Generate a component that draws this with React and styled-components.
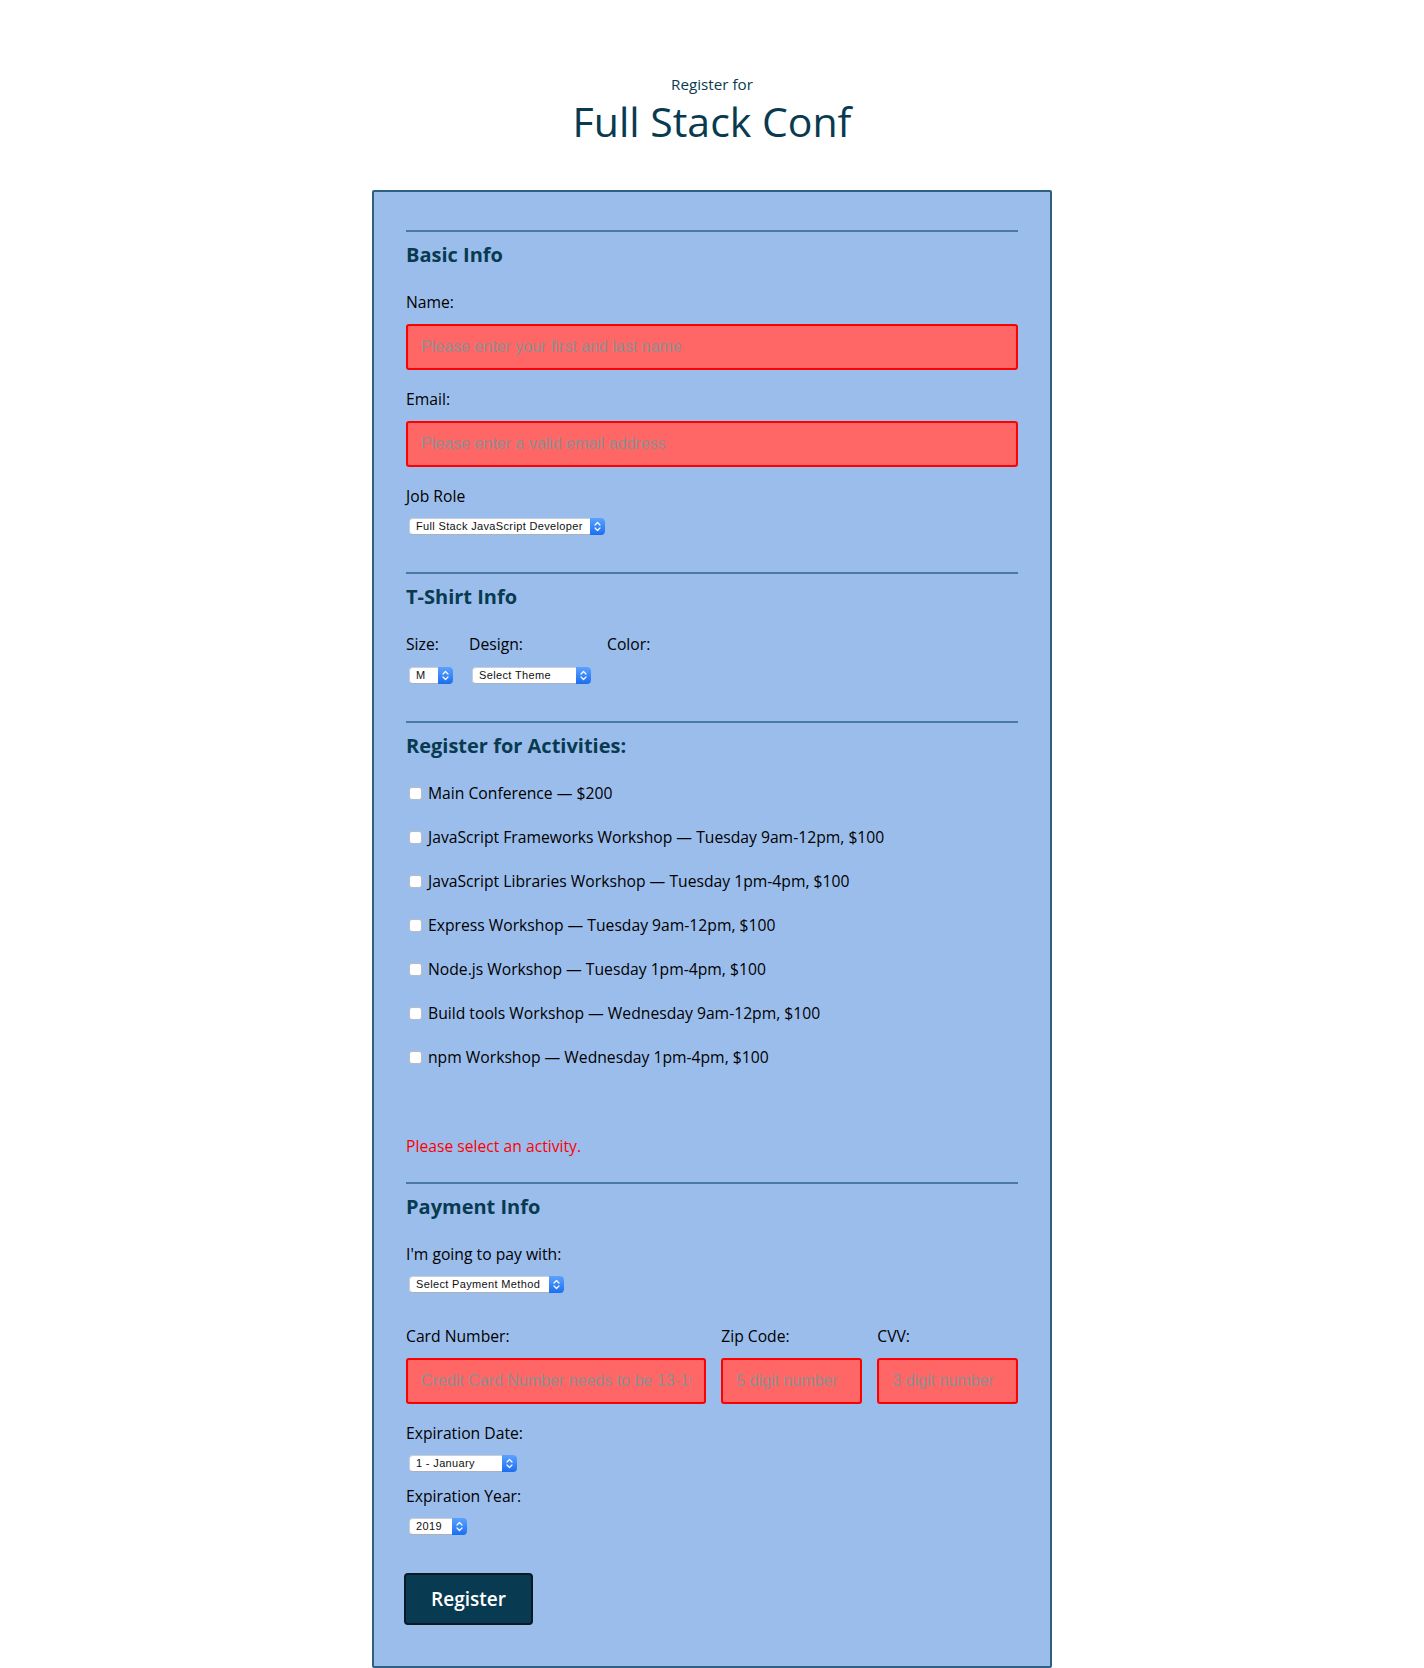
import React from "react";
import styled, { createGlobalStyle } from "styled-components";

const GlobalStyle = createGlobalStyle`
  body {
    margin: 0;
    background: #ffffff;
    font-family: "Open Sans", Lato, sans-serif;
    color: #000;
  }
`;

const Page = styled.div`
  display: flex;
  flex-direction: column;
  align-items: center;
  padding-top: 74px;
`;

const Header = styled.header`
  text-align: center;
  color: #083a50;
  margin-bottom: 46px;
`;

const Kicker = styled.div`
  font-size: 15.2px;
  line-height: 20px;
`;

const Title = styled.h1`
  margin: 4px 0 0;
  font-size: 41px;
  line-height: 46px;
  font-weight: 500;
`;

const Form = styled.form`
  box-sizing: border-box;
  width: 680px;
  background: #9bbdec;
  border: 2px solid #2f5f82;
  border-radius: 2px;
  padding: 38px 32px 41px;
`;

const Section = styled.fieldset`
  border: 0;
  border-top: 2px solid #4a7aa0;
  margin: 0;
  padding: 10px 0 37px;
  min-width: 0;
`;

const Legend = styled.h2`
  margin: 1px 0 25px;
  font-size: 20px;
  line-height: 24px;
  font-weight: 700;
  color: #083a50;
`;

const Label = styled.label`
  display: block;
  font-size: 15.7px;
  line-height: 20px;
  margin-bottom: 12px;
`;

const TextInput = styled.input`
  display: block;
  box-sizing: border-box;
  width: 100%;
  height: 46px;
  margin: 0 0 19px;
  padding: 0 13px;
  background: #ff6666;
  border: 2px solid #ff0000;
  border-radius: 3px;
  font-family: "Liberation Sans", Arial, sans-serif;
  font-size: 16px;
  outline: none;

  &::placeholder {
    color: #8f8f8f;
    opacity: 1;
  }
`;

const SelectWrap = styled.div`
  position: relative;
  width: ${(p) => p.$width}px;
  height: 17px;
  margin: 1px 0 0 3px;
`;

const Select = styled.select`
  appearance: none;
  -webkit-appearance: none;
  display: block;
  box-sizing: border-box;
  width: 100%;
  height: 17px;
  margin: 0;
  padding: 0 18px 0 6px;
  background: #ffffff;
  border: 1px solid #c9ced8;
  border-bottom-color: #aab1bd;
  border-radius: 4px;
  font-family: "Liberation Sans", Arial, sans-serif;
  font-size: 11px;
  letter-spacing: 0.35px;
  line-height: 15px;
  color: #111;
  outline: none;
`;

const ArrowBox = styled.span`
  position: absolute;
  top: 0;
  right: 0;
  width: 15px;
  height: 17px;
  border-radius: 0 4px 4px 0;
  background: linear-gradient(#5ba2ff, #1c6ef0);
  display: flex;
  align-items: center;
  justify-content: center;
  pointer-events: none;
`;

const TshirtRow = styled.div`
  display: flex;
  gap: 16px;
`;

const Column = styled.div`
  display: flex;
  flex-direction: column;
`;

const ActivityList = styled.div`
  display: flex;
  flex-direction: column;
  gap: 24px;
`;

const Activity = styled.label`
  display: flex;
  align-items: center;
  height: 20px;
  font-size: 15.7px;
`;

const Checkbox = styled.input`
  appearance: none;
  -webkit-appearance: none;
  flex: none;
  width: 13px;
  height: 13px;
  margin: 0 6px 0 3px;
  background: #fff;
  border: 1px solid #b8bcc4;
  border-radius: 3px;
  box-sizing: border-box;
`;

const ErrorText = styled.p`
  margin: 69px 0 -11px;
  font-size: 15.7px;
  line-height: 20px;
  color: #ff0000;
`;

const CardGrid = styled.div`
  display: grid;
  grid-template-columns: 49% 23% 23%;
  justify-content: space-between;
`;

const Gap = styled.div`
  height: ${(p) => p.$h}px;
`;

const Button = styled.button`
  display: block;
  width: 129px;
  height: 52px;
  margin: 1px 0 0 -2px;
  background: #083b52;
  border: 2px solid #0b1a22;
  border-radius: 4px;
  color: #fff;
  font-family: "Open Sans", Lato, sans-serif;
  font-size: 19px;
  font-weight: 600;
`;

const Chevrons = () => (
  <svg width="7" height="11" viewBox="0 0 7 11" fill="none" stroke="#fff" strokeWidth="1.2" strokeLinecap="round" strokeLinejoin="round">
    <path d="M1 4 L3.5 1.5 L6 4" />
    <path d="M1 7 L3.5 9.5 L6 7" />
  </svg>
);

const Dropdown = ({ width, options, defaultValue }) => (
  <SelectWrap $width={width}>
    <Select defaultValue={defaultValue}>
      {options.map((o) => (
        <option key={o}>{o}</option>
      ))}
    </Select>
    <ArrowBox>
      <Chevrons />
    </ArrowBox>
  </SelectWrap>
);

const activities = [
  "Main Conference — $200",
  "JavaScript Frameworks Workshop — Tuesday 9am-12pm, $100",
  "JavaScript Libraries Workshop — Tuesday 1pm-4pm, $100",
  "Express Workshop — Tuesday 9am-12pm, $100",
  "Node.js Workshop — Tuesday 1pm-4pm, $100",
  "Build tools Workshop — Wednesday 9am-12pm, $100",
  "npm Workshop — Wednesday 1pm-4pm, $100",
];

const months = [
  "January", "February", "March", "April", "May", "June",
  "July", "August", "September", "October", "November", "December",
].map((m, i) => `${i + 1} - ${m}`);

const App = () => {
  return (
    <>
      <GlobalStyle />
      <Page>
        <Header>
          <Kicker>Register for</Kicker>
          <Title>Full Stack Conf</Title>
        </Header>

        <Form onSubmit={(e) => e.preventDefault()}>
          <Section>
            <Legend>Basic Info</Legend>
            <Label>Name:</Label>
            <TextInput placeholder="Please enter your first and last name" />
            <Label>Email:</Label>
            <TextInput placeholder="Please enter a valid email address" />
            <Label>Job Role</Label>
            <Dropdown
              width={196}
              defaultValue="Full Stack JavaScript Developer"
              options={["Full Stack JavaScript Developer", "Front End Developer", "Back End Developer", "Designer", "Student/Job Seeker", "Other"]}
            />
          </Section>

          <Section>
            <Legend>T-Shirt Info</Legend>
            <TshirtRow>
              <Column>
                <Label>Size:</Label>
                <Dropdown width={44} defaultValue="M" options={["S", "M", "L", "XL"]} />
              </Column>
              <Column>
                <Label>Design:</Label>
                <Dropdown width={119} options={["Select Theme", "Theme - JS Puns", "Theme - I ♥ JS"]} />
              </Column>
              <Column>
                <Label>Color:</Label>
              </Column>
            </TshirtRow>
          </Section>

          <Section>
            <Legend>Register for Activities:</Legend>
            <ActivityList>
              {activities.map((a) => (
                <Activity key={a}>
                  <Checkbox type="checkbox" />
                  {a}
                </Activity>
              ))}
            </ActivityList>
            <ErrorText>Please select an activity.</ErrorText>
          </Section>

          <Section>
            <Legend>Payment Info</Legend>
            <Label>I'm going to pay with:</Label>
            <Dropdown width={155} options={["Select Payment Method", "Credit Card", "PayPal", "Bitcoin"]} />
            <Gap $h={33} />
            <CardGrid>
              <div>
                <Label>Card Number:</Label>
                <TextInput placeholder="Credit Card Number needs to be 13-16 digits" />
              </div>
              <div>
                <Label>Zip Code:</Label>
                <TextInput placeholder="5 digit number" />
              </div>
              <div>
                <Label>CVV:</Label>
                <TextInput placeholder="3 digit number" />
              </div>
            </CardGrid>
            <Label>Expiration Date:</Label>
            <Dropdown width={108} options={months} />
            <Gap $h={14} />
            <Label>Expiration Year:</Label>
            <Dropdown width={58} options={["2019", "2020", "2021", "2022", "2023", "2024"]} />
          </Section>

          <Button type="submit">Register</Button>
        </Form>
      </Page>
    </>
  );
};

export default App;
